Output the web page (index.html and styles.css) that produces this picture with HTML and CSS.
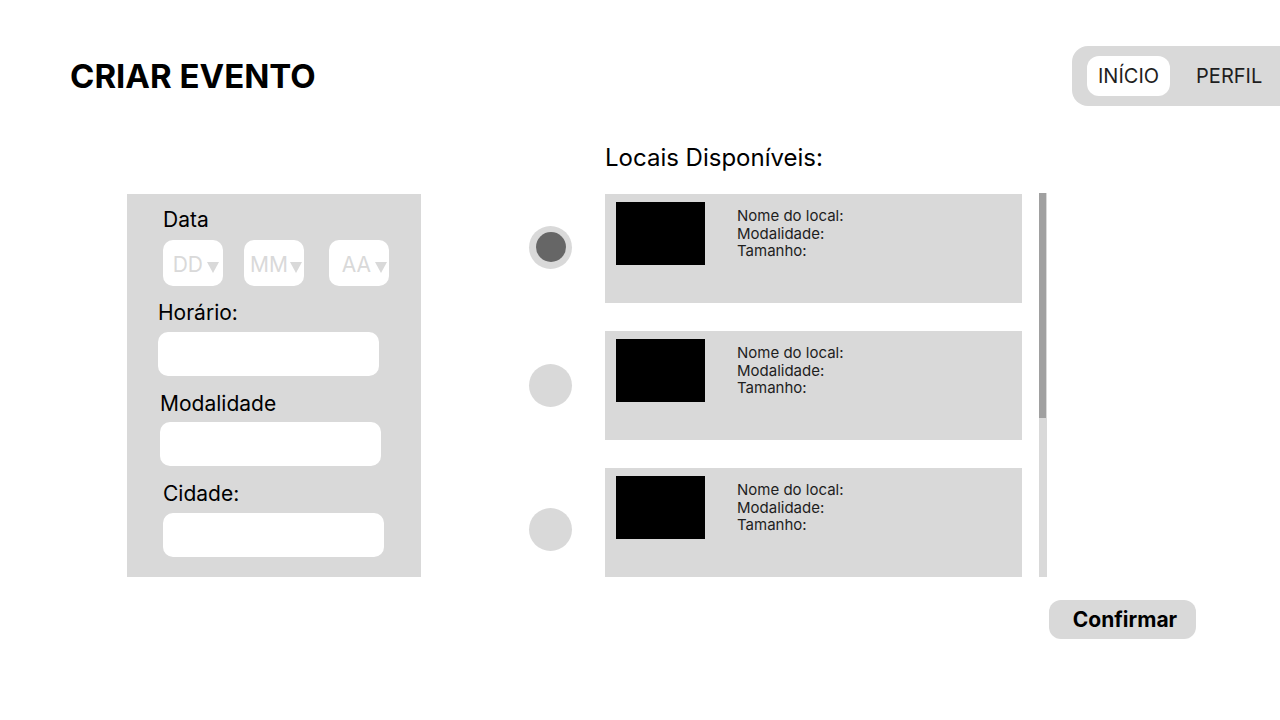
FILE: index.html
```html
<!DOCTYPE html>
<html lang="pt-BR">
<head>
    <meta charset="UTF-8">
    <meta name="viewport" content="width=device-width, initial-scale=1.0">
    <title>Criar Evento</title>
    <link rel="stylesheet" href="styles.css">
</head>
<body>

    <header class="topbar">
        <h1>CRIAR EVENTO</h1>
        <nav class="menu">
            <a href="#" class="menu-item active">INÍCIO</a>
            <a href="#" class="menu-item">PERFIL</a>
        </nav>
    </header>

    <main class="content">
        <form class="event-form">
            <div class="field field-data">
                <label>Data</label>
                <div class="date-row">
                    <div class="date-select">DD<span class="caret"></span></div>
                    <div class="date-select date-mm">MM<span class="caret"></span></div>
                    <div class="date-select date-aa">AA<span class="caret"></span></div>
                </div>
            </div>
            <div class="field field-horario">
                <label>Horário:</label>
                <input type="text">
            </div>
            <div class="field field-modalidade">
                <label>Modalidade</label>
                <input type="text">
            </div>
            <div class="field field-cidade">
                <label>Cidade:</label>
                <input type="text">
            </div>
        </form>

        <h2 class="locais-title">Locais Disponíveis:</h2>

        <div class="locais">
            <ul class="local-list">
                <li class="local-row">
                    <span class="radio selected"></span>
                    <div class="local-card">
                        <div class="local-photo"></div>
                        <div class="local-info">
                            Nome do local:<br>
                            Modalidade:<br>
                            Tamanho:
                        </div>
                    </div>
                </li>
                <li class="local-row">
                    <span class="radio"></span>
                    <div class="local-card">
                        <div class="local-photo"></div>
                        <div class="local-info">
                            Nome do local:<br>
                            Modalidade:<br>
                            Tamanho:
                        </div>
                    </div>
                </li>
                <li class="local-row last">
                    <span class="radio"></span>
                    <div class="local-card">
                        <div class="local-photo"></div>
                        <div class="local-info">
                            Nome do local:<br>
                            Modalidade:<br>
                            Tamanho:
                        </div>
                    </div>
                </li>
            </ul>
            <div class="scrollbar">
                <div class="scroll-thumb"></div>
            </div>
        </div>
    </main>

    <div class="actions">
        <button type="button">Confirmar</button>
    </div>

</body>
</html>
```

FILE: styles.css
```css
body {
    font-family: Inter, 'Noto Sans', sans-serif;
    background-color: #ffffff;
    color: #000000;
    margin: 0;
}
.topbar {
    display: flex;
    justify-content: space-between;
    align-items: center;
    padding-top: 46px;
    padding-left: 70px;
}
h1 {
    font-size: 33px;
    font-weight: 700;
    margin: 0;
}
.menu {
    display: flex;
    gap: 15px;
    background-color: #d9d9d9;
    border-radius: 16px 0 0 16px;
    padding: 10px 8px 10px 15px;
    width: 185px;
}
.menu-item {
    font-size: 20px;
    color: #1e1e1e;
    text-decoration: none;
    line-height: 40px;
    padding: 0 11px;
    border-radius: 12px;
}
.menu-item.active {
    background-color: #ffffff;
}

/* main area */
.content {
    display: grid;
    grid-template-columns: 294px auto;
    grid-template-areas:
        ". title"
        "form list";
    column-gap: 108px;
    padding-left: 127px;
    margin-top: 35px;
}
.event-form {
    grid-area: form;
    background-color: #d9d9d9;
    padding: 14px 0 20px;
}
.field {
    display: flex;
    flex-direction: column;
    margin-top: 16px;
}
.field label {
    font-size: 21px;
    line-height: 24px;
    margin-bottom: 6px;
}
.field-data {
    margin-top: 0;
    padding-left: 36px;
}
.field-data label {
    margin-bottom: 8px;
}
.field-horario {
    margin-top: 15px;
    padding-left: 31px;
}
.field-horario label {
    margin-bottom: 7px;
}
.field-modalidade {
    padding-left: 33px;
}
.field-cidade {
    padding-left: 36px;
}
.field-cidade label {
    margin-bottom: 7px;
}
.field input {
    width: 221px;
    height: 44px;
    box-sizing: border-box;
    border: none;
    border-radius: 10px;
    background-color: #ffffff;
}
.date-row {
    display: flex;
}
.date-select {
    width: 60px;
    height: 46px;
    box-sizing: border-box;
    background-color: #ffffff;
    border-radius: 10px;
    display: flex;
    align-items: center;
    justify-content: flex-end;
    gap: 4px;
    padding: 2px 4px 0 0;
    font-size: 21px;
    color: #d9d9d9;
}
.date-mm {
    margin-left: 21px;
    padding-right: 2px;
    gap: 2px;
}
.date-aa {
    margin-left: 25px;
    padding-right: 2px;
}
.caret {
    width: 0;
    height: 0;
    border-left: 6px solid transparent;
    border-right: 6px solid transparent;
    border-top: 11px solid #d9d9d9;
    margin-top: 6px;
}

/* locais */
.locais-title {
    grid-area: title;
    font-size: 24px;
    font-weight: 400;
    margin: 2px 0 22px 76px;
}
.locais {
    grid-area: list;
    display: flex;
    align-items: flex-start;
}
.local-list {
    list-style: none;
    margin: 0;
    padding: 0;
    display: flex;
    flex-direction: column;
    gap: 28px;
}
.local-row {
    display: flex;
    align-items: center;
    gap: 33px;
}
.local-row.last .radio {
    margin-top: 14px;
}
.radio {
    width: 43px;
    height: 43px;
    border-radius: 50%;
    background-color: #d9d9d9;
    display: flex;
    align-items: center;
    justify-content: center;
}
.radio.selected {
    margin-top: -3px;
}
.radio.selected::after {
    content: "";
    width: 30px;
    height: 30px;
    border-radius: 50%;
    background-color: #666666;
}
.local-card {
    width: 417px;
    height: 109px;
    background-color: #d9d9d9;
    display: flex;
    align-items: flex-start;
    padding: 8px 11px;
    box-sizing: border-box;
}
.local-photo {
    width: 89px;
    height: 63px;
    background-color: #000000;
}
.local-info {
    margin-left: 32px;
    margin-top: 5px;
    font-size: 15px;
    line-height: 17.5px;
    color: #1e1e1e;
}
.scrollbar {
    width: 8px;
    height: 384px;
    margin-left: 17px;
    margin-top: -1px;
    background-color: #d9d9d9;
}
.scroll-thumb {
    width: 7px;
    height: 225px;
    background-color: #a0a0a0;
}

.actions {
    display: flex;
    justify-content: flex-end;
    padding-right: 84px;
    margin-top: 23px;
}
button {
    width: 147px;
    height: 39px;
    font-family: Inter, 'Noto Sans', sans-serif;
    font-size: 21px;
    font-weight: 700;
    color: #000000;
    background-color: #d9d9d9;
    border: none;
    border-radius: 12px;
    padding: 0 0 0 5px;
    cursor: pointer;
}
```
